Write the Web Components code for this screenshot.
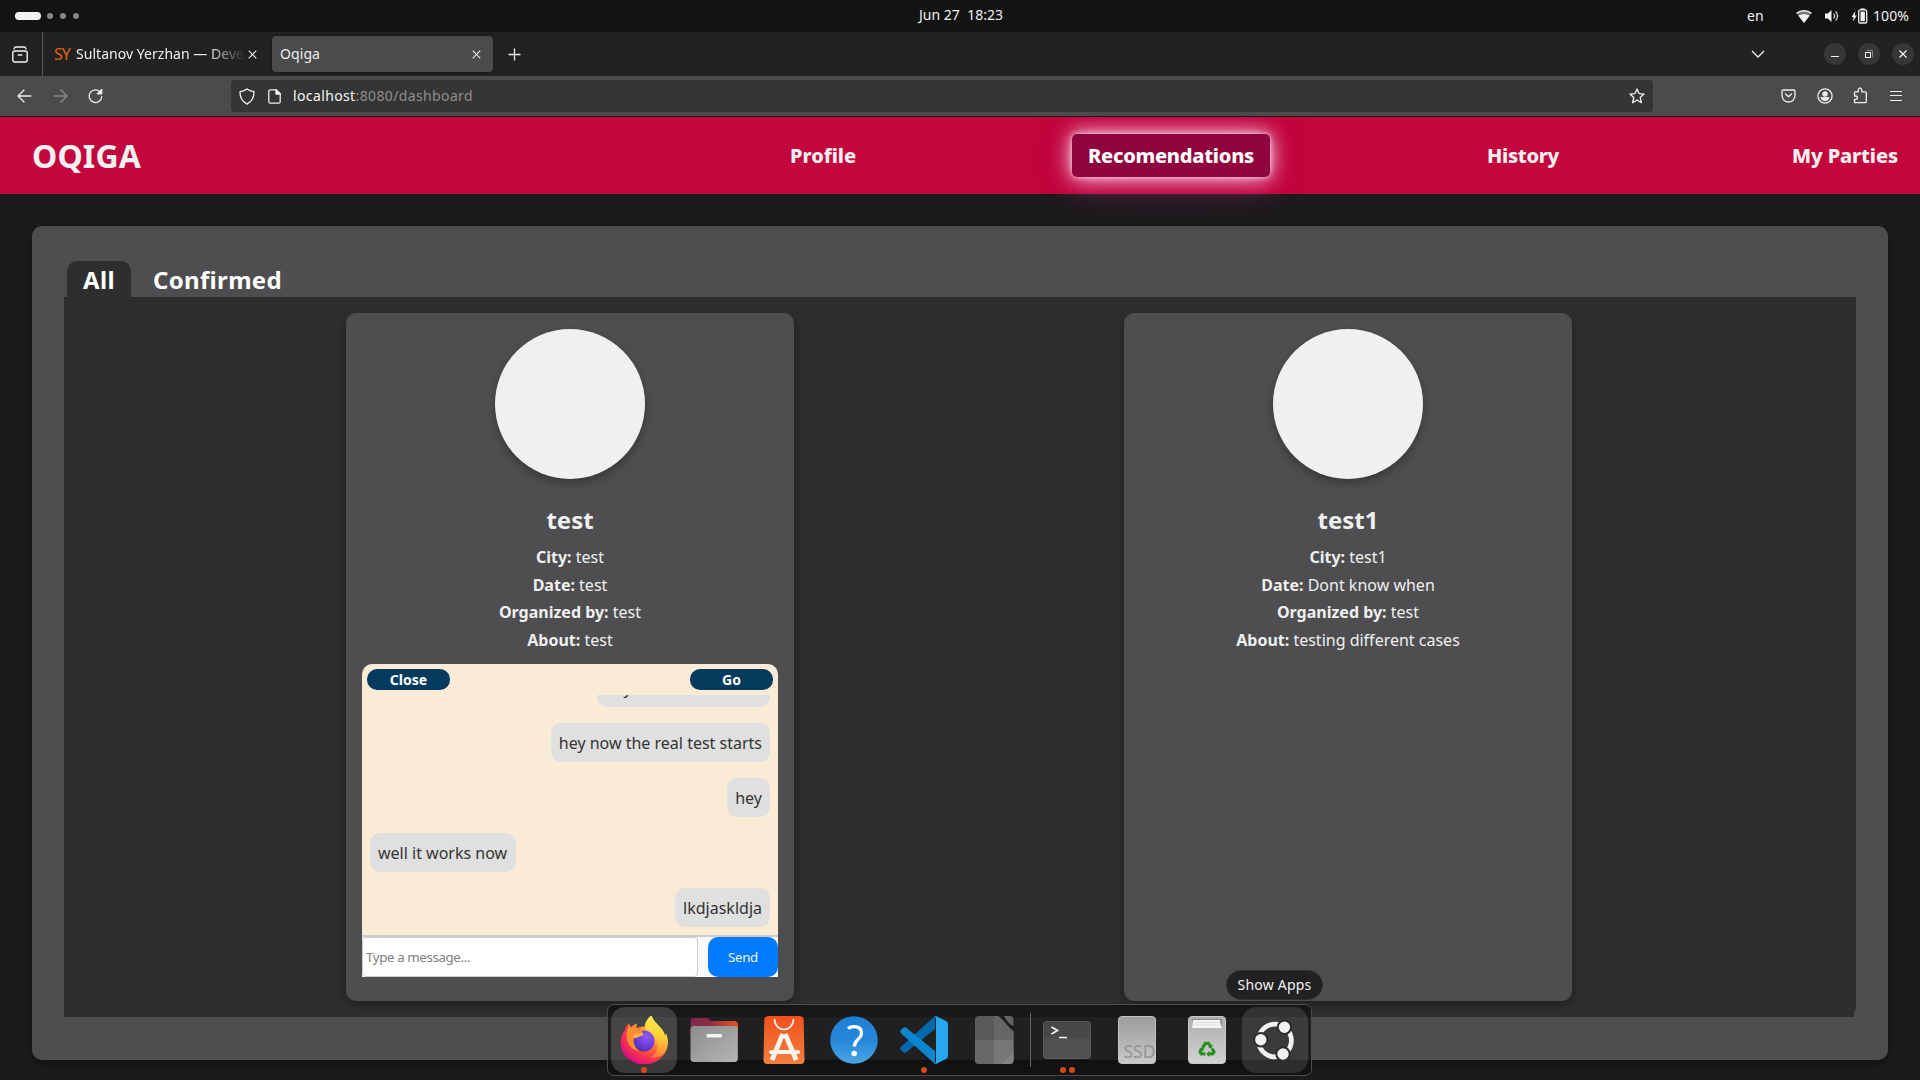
<!DOCTYPE html>
<html lang="en">
<head>
<meta charset="utf-8">
<title>Oqiga</title>
<style>
html,body{margin:0;height:100%;overflow:hidden}
body{background:#1b1b1d;font-family:"Noto Sans",sans-serif;color:#f0f0f0;width:1920px;height:1080px}
</style>
</head>
<body>
<desktop-shell></desktop-shell>
<script>
const make = (name, html, after) => customElements.define(name, class extends HTMLElement {
  connectedCallback() {
    if (this.shadowRoot) return;
    const t = document.createElement('template');
    t.innerHTML = html;
    this.attachShadow({mode: 'open'}).append(t.content.cloneNode(true));
    if (after) after(this, this.shadowRoot);
  }
});

make('desktop-shell', `
<style>:host{display:flex;flex-direction:column;width:1920px;height:1080px;position:relative;overflow:hidden}</style>
<system-bar></system-bar><tab-strip></tab-strip><nav-toolbar></nav-toolbar><site-header></site-header>
<party-panel></party-panel>
<app-dock></app-dock><dock-tip>Show Apps</dock-tip>`);

make('system-bar', `
<style>:host{display:flex;align-items:center;height:32px;flex:none;background:#131313;color:#f0f0f0;font-size:14px;line-height:20px}
.pill{width:26px;height:8px;border-radius:4px;background:#f2f2f2;margin-left:15px}
.dot{width:6px;height:6px;border-radius:50%;background:#868686;margin-left:6px}.dot+.dot{margin-left:7px}
fit-text{margin-top:-1px}svg{flex:none}</style>
<span class="pill"></span><span class="dot"></span><span class="dot"></span><span class="dot"></span>
<fit-text w="84" style="margin-left:840px;margin-top:-2px;white-space:pre">Jun 27  18:23</fit-text>
<fit-text w="17" style="margin-left:744px">en</fit-text>
<svg style="margin-left:31px" width="18" height="18" viewBox="0 0 18 18"><path d="M9 16 1.500 6.200C5.800 2.900 12.200 2.900 16.500 6.200Z" fill="#777"/><path d="M1.500 6.200C5.800 2.900 12.200 2.900 16.500 6.200" fill="none" stroke="#f2f2f2" stroke-width="1.400"/><path d="M9 16 3.500 8.800C6.500 6.800 11.500 6.800 14.500 8.800Z" fill="#f2f2f2"/></svg>
<svg style="margin-left:11px" width="16" height="16" viewBox="0 0 16 16"><path d="M1 5.500h2.800L7.500 2v12L3.800 10.500H1Z" fill="#f2f2f2"/><path d="M9.600 5.600q2 2.400 0 4.800M11.600 3.500q4 4.500 0 9" fill="none" stroke="#d0d0d0" stroke-width="1.300"/></svg>
<svg style="margin-left:11px" width="18" height="18" viewBox="0 0 18 18"><path d="M4.400 4 .6 10h2l-.6 4.600L5.800 8.600h-2Z" fill="#f2f2f2"/><rect x="7.700" y="2.800" width="8" height="13.200" rx="1.600" fill="none" stroke="#f2f2f2" stroke-width="1.300"/><rect x="9.500" y="4.600" width="4.400" height="9.600" fill="#f2f2f2"/><path d="M9.600 1.400h4.200v1.400H9.600z" fill="#f2f2f2"/></svg>
<fit-text w="36" style="margin-left:4px">100%</fit-text>`);

const cross = `<svg width="9" height="9" viewBox="0 0 9 9"><path d="M.7.7l7.600 7.600M8.300.7.7 8.300" stroke="#e8e8e8" stroke-width="1.100"/></svg>`;
make('tab-strip', `
<style>:host{display:flex;align-items:center;height:44px;flex:none;background:#222;color:#f0f0f0;font-size:14px;line-height:20px}
.pin{width:42px;height:44px;display:flex;align-items:center;border-right:1px solid #5b5b5b;box-sizing:content-box}
.pin svg{margin-left:12px}svg{flex:none}
.name{width:168px;overflow:hidden;margin-left:6px;-webkit-mask-image:linear-gradient(90deg,#000 78%,transparent 101%);mask-image:linear-gradient(90deg,#000 78%,transparent 101%);white-space:nowrap;display:flex}
.tab{width:221px;height:36px;border-radius:4px;background:#4b4b4b;box-shadow:0 0 3px rgba(0,0,0,.5);display:flex;align-items:center;margin-left:15px}
.wb{width:22px;height:22px;border-radius:50%;background:#373737;display:flex;align-items:center;justify-content:center;margin-left:12px}</style>
<div class="pin"><svg width="16" height="17" viewBox="0 0 16 17"><g fill="none" stroke="#f2f2f2" stroke-width="1.400" stroke-linecap="round"><rect x=".8" y="5" width="14.400" height="11" rx="2"/><path d="M2 2.800Q2.400 1 4.300 1h7.400q1.900 0 2.300 1.800M6.200 9h3.600"/></g></svg></div>
<fit-text w="16" style="margin-left:11px;color:#e2650e;font-size:16px">SY</fit-text>
<div class="name"><fit-text w="168">Sultanov Yerzhan — Deve</fit-text></div>
<span style="margin-left:4px;display:flex">${cross}</span>
<div class="tab"><fit-text w="40" style="margin-left:8px">Oqiga</fit-text><span style="margin-left:152px;display:flex">${cross}</span></div>
<svg style="margin-left:15px" width="13" height="13" viewBox="0 0 13 13"><path d="M6.500.5v12M.5 6.500h12" stroke="#f0f0f0" stroke-width="1.300"/></svg>
<svg style="margin-left:1230px" width="14" height="8" viewBox="0 0 14 8"><path d="m1 1 6 6 6-6" fill="none" stroke="#f0f0f0" stroke-width="1.300"/></svg>
<div class="wb" style="margin-left:59px"><svg width="8" height="8" viewBox="0 0 8 8"><path d="M0 6.500h8" stroke="#f2f2f2"/></svg></div>
<div class="wb"><svg width="10" height="10" viewBox="0 0 10 10"><path d="M3 1.500h5.500V8" fill="none" stroke="#8a8a8a"/><rect x="1.500" y="3.500" width="5" height="5" fill="none" stroke="#f2f2f2"/></svg></div>
<div class="wb"><svg width="8" height="8" viewBox="0 0 8 8"><path d="m.5.5 7 7m0-7-7 7" stroke="#f2f2f2" stroke-width="1.300"/></svg></div>`);

make('nav-toolbar', `
<style>:host{display:flex;align-items:center;height:40px;flex:none;background:#4b4b4b;border-bottom:1px solid #1a1414;font-size:14px;line-height:20px}
svg{flex:none;fill:none;stroke:#efefef;stroke-width:1.300;stroke-linejoin:round;stroke-linecap:round}
.url{display:flex;align-items:center;width:1422px;height:32px;border-radius:4px;background:#353535;margin-left:128px;color:#f5f5f5}
i{font-style:normal;color:#8e8e8e}</style>
<svg style="margin-left:16.500px" width="15" height="14" viewBox="0 0 15 14"><path d="M14 7H1M7 1 1 7l6 6"/></svg>
<svg style="margin-left:21px;stroke:#8b8b8b" width="15" height="14" viewBox="0 0 15 14"><path d="M1 7h13M8 1l6 6-6 6"/></svg>
<svg style="margin-left:20.500px" width="15" height="16" viewBox="0 0 15 16"><path d="M12.600 4.500A6.300 6.300 0 1 0 13.800 8.500"/><path d="M13.700 1.500v4.300H9.400Z" fill="#efefef"/></svg>
<div class="url">
<svg style="margin-left:8px" width="16" height="17" viewBox="0 0 16 17"><path d="M8 1c2.400 1.600 4.600 2.400 7 2.600.2 5.400-1.600 9.800-7 12.500C2.600 13.400.8 9 1 3.600 3.400 3.400 5.600 2.600 8 1Z"/></svg>
<svg style="margin-left:13px" width="13" height="15" viewBox="0 0 13 15"><path d="M2.500.8h5.700l4 4v7.900q0 1.500-1.500 1.500H2.300Q.8 14.200.8 12.700V2.300Q.8.8 2.500.8Z"/><path d="M8 1v4h4Z" fill="#efefef"/></svg>
<fit-text w="180" style="margin-left:12px">localhost<i>:8080/dashboard</i></fit-text>
<svg style="margin-left:1156px" width="16" height="16" viewBox="0 0 16 16"><path d="m8 .9 2 4.700 5.100.5-3.900 3.400 1.200 5.200L8 12l-4.400 2.700 1.200-5.200L.9 6.100 6 5.600Z"/></svg>
</div>
<svg style="margin-left:128px" width="15" height="14" viewBox="0 0 15 14"><path d="M2.300 1h10.400Q14 1 14 2.300v4Q13.500 12.800 7.500 13 1.500 12.800 1 6.300v-4Q1 1 2.300 1ZM4.500 5l3 2.800 3-2.800"/></svg>
<svg style="margin-left:21px" width="16" height="16" viewBox="0 0 16 16"><circle cx="8" cy="8" r="7.100"/><circle cx="8" cy="5.900" r="2.100" fill="#efefef"/><path d="M4 9.500h8q-.4 3.200-4 3.300-3.600-.1-4-3.300Z" fill="#efefef" stroke-width=".8"/></svg>
<svg style="margin-left:20px;margin-top:-1px" width="15" height="17" viewBox="0 0 15 17"><path d="M1.500 15.700v-3.200h1.200c2.300 0 2.300-3.500 0-3.500H1.500V5.500q0-.7.7-.7h3V3q.3-2 1.800-2t1.800 2v1.800h3.600q.9 0 .9.9v9q0 1-1 1Z"/></svg>
<svg style="margin-left:21px;stroke-width:1.200" width="14" height="12" viewBox="0 0 14 12"><path d="M1.500 1.500h11M1.500 5.500h11M1.500 10.500h11"/></svg>`);

make('site-header', `
<style>:host{display:flex;align-items:center;height:77px;flex:none;background:#c3063d;font-weight:700;position:relative;z-index:0;clip-path:inset(0 0 -60px 0)}
h1{margin:0 0 0 32px;font-size:32px;line-height:44px;display:flex}
nav{display:flex;align-items:center;font-size:20px;line-height:27px;margin-left:649px;font-weight:800}
.on{width:198px;height:43px;border-radius:5px;background:#91053e;display:flex;align-items:center;justify-content:center;color:#fff;margin-left:216px;
box-shadow:0 0 5px rgba(255,255,255,.6),0 0 20px rgba(255,240,250,1),0 4px 30px rgba(215,55,145,.55),0 4px 50px rgba(190,0,90,.3)}</style>
<h1><fit-text w="109">OQIGA</fit-text></h1>
<nav><fit-text w="66">Profile</fit-text><div class="on"><fit-text w="166">Recomendations</fit-text></div><fit-text w="72" style="margin-left:217px">History</fit-text><fit-text w="106" style="margin-left:233px">My Parties</fit-text></nav>`);

make('party-panel', `
<style>:host{display:block;position:relative;z-index:1;margin:32px 32px 0;padding:35px 32px 43px;background:#4e4e50;border-radius:10px;box-shadow:0 4px 8px rgba(0,0,0,.3);height:756px;flex:none}
.tabs{display:flex;height:36px;font-size:24px;line-height:33px;font-weight:700;color:#fff}
.t{width:64px;margin-left:3px;background:#2e2e2e;border-radius:10px 10px 0 0;display:flex;justify-content:center}
.c{margin-left:22px;display:flex}
.list{display:flex;gap:330px;height:704px;padding:16px 0 0 282px;background:#2e2e2e;clip-path:polygon(0 0,100% 0,100% 711px,1790px 716px,1790px 100%,0 100%);width:1510px}</style>
<div class="tabs"><div class="t"><fit-text w="32" style="margin-top:1.500px">All</fit-text></div><div class="c"><fit-text w="129" style="margin-top:1.500px">Confirmed</fit-text></div></div>
<div class="list">
<party-card name="test" city="test" date="test" by="test" about="test"><chat-box></chat-box></party-card>
<party-card name="test1" city="test1" date="Dont know when" by="test" about="testing different cases"></party-card>
</div>`);

make('party-card', `
<style>:host{display:flex;flex-direction:column;align-items:center;width:416px;height:656px;padding:16px;background:#4e4e50;border-radius:10px;box-shadow:0 4px 12px rgba(0,0,0,.3);color:#f0f0f0}
.av{width:150px;height:150px;border-radius:50%;background:#f0f0f0;box-shadow:0 4px 8px rgba(0,0,0,.3);flex:none}
h2{margin:23px 0 6px;font-size:24px;line-height:36px;height:36px}
p{margin:0;font-size:16px;line-height:27.600px;height:27.600px}
b{font-weight:700}slot{display:block;margin-top:9.600px;width:416px}</style>
<div class="av"></div><h2></h2><div id="f" style="text-align:center"></div><slot></slot>`, (el, r) => {
  const g = k => el.getAttribute(k);
  r.querySelector('h2').textContent = g('name');
  r.querySelector('#f').innerHTML = [['City','city'],['Date','date'],['Organized by','by'],['About','about']]
    .map(([l,k]) => `<p><b>${l}:</b> ${g(k)}</p>`).join('');
});

make('chat-box', `
<style>:host{display:flex;flex-direction:column;width:416px;height:313px;background:#faebd7;border-radius:10px 10px 0 0;overflow:hidden;color:#333}
.h{display:flex;justify-content:space-between;padding:5px;height:21px;flex:none}
.b{width:83px;height:21px;border-radius:10px;background:#073b5e;color:#fff;font-weight:700;font-size:14px;line-height:21px;text-align:center}
.m{height:240px;flex:none;padding:0 8px 8px;display:flex;flex-direction:column;justify-content:flex-end;gap:16px;overflow:hidden;box-sizing:border-box}
.m div{flex:none;align-self:flex-end;height:38px;line-height:39px;padding:1px 8px 0;border-radius:10px;background:#e0e0e0;font-size:16px;white-space:nowrap}
.m .l{align-self:flex-start;width:130px}
.f{display:flex;justify-content:space-between;height:40px;border-top:2px solid #ccc;background:#f9f9f9}
.i{width:331px;padding-left:3px;height:38px;border:1px solid #ccc;border-radius:4px;background:#fff;color:#808080;font-size:13.333px;line-height:38px;display:flex}
.s{width:70px;background:#007bff;color:#f2f2f2;border-radius:10px;font-size:13.333px;line-height:41px;height:40px;display:flex;justify-content:center}</style>
<div class="h"><div class="b">Close</div><div class="b">Go</div></div>
<div class="m"><div><fit-text w="157">hey now it does work</fit-text></div><div>hey now the real test starts</div><div>hey</div><div class="l">well it works now</div><div>lkdjaskldja</div></div>
<div class="f"><div class="i"><fit-text w="104">Type a message...</fit-text></div><div class="s"><fit-text w="30">Send</fit-text></div></div>`);

const svg = (w, body) => `<svg width="48" height="48" viewBox="0 0 48 48">${body}</svg>`;
make('dock-item', `
<style>:host{width:66px;height:66px;border-radius:14px;display:flex;align-items:center;justify-content:center;position:relative;flex:none}
:host([on]){background:rgba(255,255,255,.17)}:host([hover]){background:rgba(255,255,255,.12)}
.d{position:absolute;bottom:0;left:0;width:66px;display:flex;gap:3px;justify-content:center}.d i{width:6px;height:6px;border-radius:50%;background:#d9481a}</style>
<slot></slot><div class="d"></div>`, (el, r) => {
  r.querySelector('.d').innerHTML = '<i></i>'.repeat(+el.getAttribute('dots') || 0);
});

make('app-dock', `
<style>:host{display:flex;align-items:center;position:absolute;z-index:3;left:607px;top:1004px;height:70px;border:1px solid #4c4c4c;border-radius:7px;background:rgba(16,16,16,.74);box-sizing:content-box;gap:4px;padding-left:3px;width:700px}
.sep{width:1px;height:54px;background:#666;flex:none;margin:0 -1px 0 -1px}
text{font-family:"Noto Sans",sans-serif}</style>
<dock-item on dots="1">${svg(48, `<defs><radialGradient id="fx" cx=".82" cy=".12" r="1"><stop offset="0" stop-color="#fff44f"/><stop offset=".25" stop-color="#ffc02e"/><stop offset=".48" stop-color="#ff7139"/><stop offset=".75" stop-color="#f8344f"/><stop offset="1" stop-color="#d80a83"/></radialGradient><linearGradient id="fy" x1=".6" y1="0" x2=".4" y2="1"><stop offset="0" stop-color="#fff44f"/><stop offset=".45" stop-color="#ffd23a"/><stop offset=".8" stop-color="#ff9a35"/><stop offset="1" stop-color="#ff6a3a"/></linearGradient><radialGradient id="fp" cx=".65" cy=".3" r=".8"><stop offset="0" stop-color="#9059ff"/><stop offset=".6" stop-color="#6c3bd5"/><stop offset="1" stop-color="#43309c"/></radialGradient></defs><path d="M9 7c0 2 .5 3.500 1.500 4.500 2-2 4-3.500 6.500-4-.8 2-.8 3.500 0 4.500C22 10 29 10 34 14l8 2c3 4 5 8.500 5 14C46 41 36 48.500 24 48.500S.5 39 .5 27C.5 21 2 17 5 14c.2-3 2-5 4-7Z" fill="url(#fx)"/><path d="M24.500 11C25 6 28 2 31.500-1c1 5 5 8 8.500 12 3 3 4.600 6 5 8.500l1-2C48.500 23 48.800 29 46 34.500 43 41 35 43 30 41c7-3 9-10 6-17-2-5-6-8-11.500-13Z" fill="url(#fy)"/><circle cx="24" cy="25" r="10.600" fill="url(#fp)"/><path d="M9.500 8c.3 1.800 1 3 2 4 1.500-2 3-3.500 5-4-.8 3-.2 5 1 6 4 .3 6 2 5 4-3 1.500-6 1.500-8.500 4.500C13 25 14 31 19 35c-6-1-11-5-12-12-1-5 .5-11 2.500-15Z" fill="#ff8e30"/><path d="M12 20c3-3 9-3.500 12-2-2 3-6 2-8 4.500Z" fill="#ffb347"/>`)}</dock-item>
<dock-item>${svg(48, `<defs><linearGradient id="fo"><stop offset="0" stop-color="#7d2950"/><stop offset=".4" stop-color="#8c2c45"/><stop offset="1" stop-color="#ea5420"/></linearGradient><linearGradient id="fg" x2="1" y2="1"><stop offset="0" stop-color="#8c8c8c"/><stop offset="1" stop-color="#b5b5b5"/></linearGradient></defs><path d="M.5 5Q.5 2 3.500 2h13q1.600 0 2.500 1.300L20.500 5H44q4 0 4 4v12H.5Z" fill="url(#fo)"/><rect x=".5" y="10" width="47.300" height="36" rx="3.500" fill="url(#fg)"/><rect x="16.500" y="18" width="15.500" height="3.400" rx="1" fill="#f5f5f5"/>`)}</dock-item>
<dock-item>${svg(48, `<defs><linearGradient id="ap" x2="0" y2="1"><stop offset="0" stop-color="#f2511b"/><stop offset="1" stop-color="#f37f3e"/></linearGradient></defs><path d="M8.500 0h31q4 0 4.200 4l.8 40q0 4-4 4h-33q-4 0-4-4l.8-40q.2-4 4.200-4Z" fill="url(#ap)"/><g fill="none" stroke="#fff3eb"><path d="M14.500 3c.5 14 18.500 14 19 0" stroke-width="1.700"/><path d="M22.800 18 12 44M25.200 18l11 26" stroke-width="4.800"/><path d="M11 36h27" stroke-width="4" stroke-linecap="round"/></g>`)}</dock-item>
<dock-item>${svg(48, `<defs><linearGradient id="hp" x2="0" y2="1"><stop offset="0" stop-color="#1d7fd3"/><stop offset=".5" stop-color="#2587d9"/><stop offset="1" stop-color="#4aa6e4"/></linearGradient></defs><circle cx="24" cy="24" r="23.800" fill="url(#hp)"/><path d="M18 12.500C22 9.500 32 9.500 31.500 17.500c-.4 6-7.200 6-7.200 13" fill="none" stroke="#fff" stroke-width="3.300"/><circle cx="24.200" cy="37.500" r="2.800" fill="#fff"/>`)}</dock-item>
<dock-item dots="1">${svg(48, `<path d="M1.500 30.300 35 0v13L6 36.500q-1.500.8-2.700-.2l-2.300-2q-1.500-1.800.5-4Z" fill="#0069ad"/><path d="M1.500 17.700 35 48V35L6 11.500q-1.500-.8-2.700.2l-2.300 2q-1.500 1.800.5 4Z" fill="#0c86d1"/><path d="M34.500 47.600Q36 47 36 45V3q0-2-1.500-2.600L36 0l10 5q2 1 2 3v32q0 2-2 3l-10 5Z" fill="#27a7f0"/>`)}</dock-item>
<dock-item>${svg(48, `<path d="M9 0h18l16.500 16v28q0 4-4 4H9q-4 0-4-4V4q0-4 4-4Z" fill="#595959"/><path d="M24 0h5l14.500 15v9H24Z" fill="#666"/><path d="M5 24h19v24H9q-4 0-4-4Z" fill="#686868"/><path d="M24 24h19.500v20q0 4-4 4H24Z" fill="#777"/><path d="M43.500 36v8q0 4-4 4h-8Z" fill="#828282"/><path d="M28 0c5 2 8 9 15.500 15V9L35 0Z" fill="#1d1d1d"/><path d="M34 0h6q3.500 0 3.500 4v6q-5-1-9.500-10Z" fill="#626262"/>`)}</dock-item>
<span class="sep"></span>
<dock-item dots="2">${svg(48, `<rect y="5" width="48" height="38" rx="4" fill="#5b5b5b"/><rect x="1" y="6" width="46" height="36" rx="3" fill="#505050"/><path d="M1 6h46v16H1z" fill="#484848"/><path d="m8.500 11 6 3.500-6 3.500" fill="none" stroke="#f2f2f2" stroke-width="1.800"/><path d="M16 21.500h8" stroke="#f2f2f2" stroke-width="1.500"/>`)}</dock-item>
<dock-item>${svg(48, `<defs><linearGradient id="sd" x2="0" y2="1"><stop offset="0" stop-color="#9b9b9b"/><stop offset="1" stop-color="#c9c9c9"/></linearGradient></defs><rect x="5.500" y=".5" width="37" height="47" rx="3.500" fill="url(#sd)" stroke="#c4c4c4"/><text x="10.500" y="42" font-size="18" fill="#949494" textLength="32" lengthAdjust="spacingAndGlyphs">SSD</text>`)}</dock-item>
<dock-item>${svg(48, `<defs><linearGradient id="tr" x2="0" y2="1"><stop offset="0" stop-color="#adadad"/><stop offset="1" stop-color="#d2d2d2"/></linearGradient></defs><rect x="5.500" y=".5" width="37" height="47" rx="3.500" fill="url(#tr)" stroke="#c8c8c8"/><path d="M9 3h30v9H9z" fill="#8e8e8e"/><path d="M10 4h27v2l2 6H9Z" fill="#f5f5f5"/><path d="M12 6.500h24M11 9h26" stroke="#ccc" stroke-width=".6"/><g transform="translate(24 34) scale(.78) translate(-24 -35)"><g fill="none" stroke="#2a8f20" stroke-width="4"><path d="M18.500 32l3.300-5.500h4.200l2.800 4.500"/><path d="M30.500 33l2.500 4.500-1.700 2.500h-5M22 40h-5.300l-1.700-2.500 2.200-4"/></g><path d="m31.500 27.500-1.500 6-4.500-2ZM27 36v8l-4-4ZM14 33l5.500-2.500.5 6Z" fill="#2a8f20"/></g>`)}</dock-item>
<dock-item hover style="margin-left:-2px">${svg(48, `<circle cx="24" cy="24.500" r="16.400" fill="none" stroke="#f2f2f2" stroke-width="4.800"/><g fill="#f2f2f2" stroke="#2c2c2c" stroke-width="2"><circle cx="9.800" cy="23.800" r="6.700"/><circle cx="33.400" cy="11.200" r="6.700"/><circle cx="32" cy="38" r="6.700"/></g>`)}</dock-item>`);

make('dock-tip', `
<style>:host{display:flex;position:absolute;z-index:4;left:1226px;top:970px;width:95px;height:28px;border:1px solid #303030;border-radius:15px;background:#212121;align-items:center;justify-content:center;font-size:14px;line-height:20px;color:#f2f2f2}</style>
<fit-text w="74"><slot></slot></fit-text>`);

/* Spreads its text over the advance width given in the "w" attribute. */
make('fit-text', `<style>:host{display:inline-block;white-space:pre;flex:none}span{display:inline-block;white-space:pre}</style><span><slot></slot></span>`, (el, r) => {
  const s = r.querySelector('span'), w = +el.getAttribute('w');
  const slotted = el.querySelector('slot');
  const n = (slotted ? slotted.assignedNodes().map(x => x.textContent).join('') : el.textContent).length;
  s.style.letterSpacing = ((w - s.getBoundingClientRect().width) / n) + 'px';
  el.style.width = w + 'px';
});
</script>
</body>
</html>
